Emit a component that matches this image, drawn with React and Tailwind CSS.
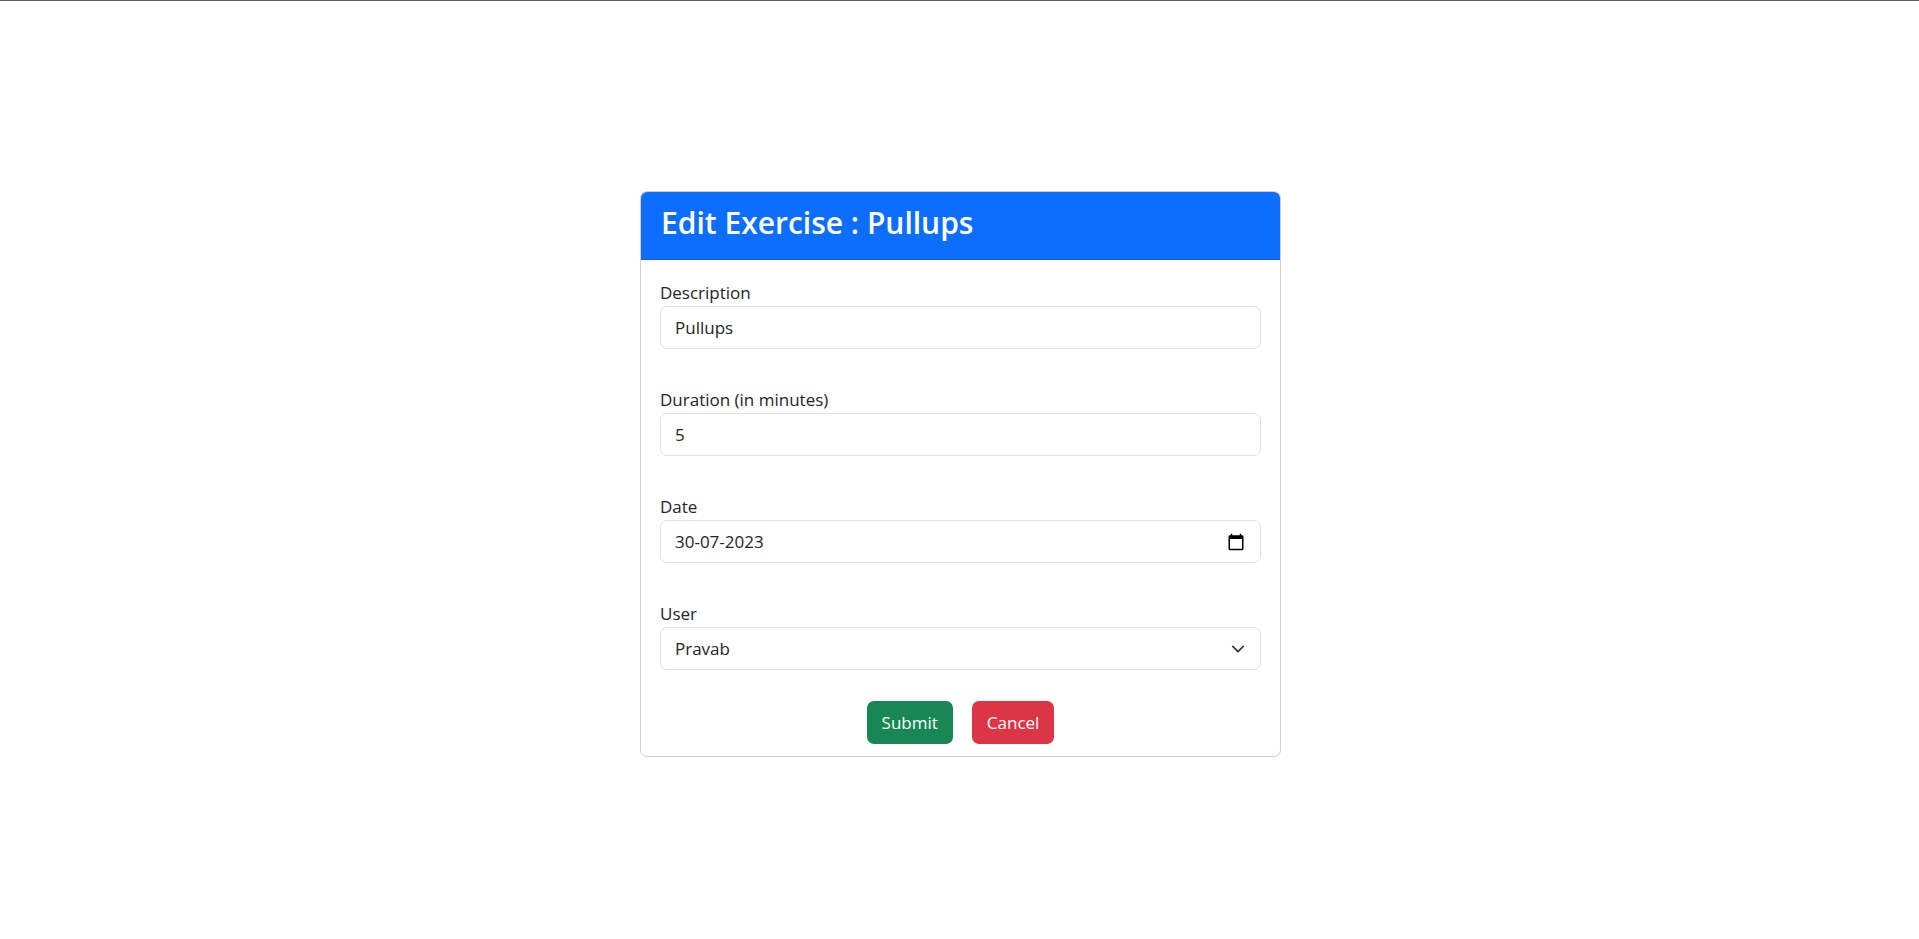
import { useState } from "react";

const control =
  "block h-[43px] w-full rounded-[7px] border border-[#dee2e6] bg-white px-[14px] text-[17px] leading-[27px] text-[#212529] outline-none focus:border-[#86b7fe]";

function Field({ id, label, children }) {
  return (
    <div>
      <label htmlFor={id} className="block h-[27px] text-[17px] leading-[27px]">
        {label}
      </label>
      {children}
    </div>
  );
}

export default function App() {
  const [form, setForm] = useState({
    description: "Pullups",
    duration: "5",
    date: "30-07-2023",
    user: "Pravab",
  });
  const update = (key) => (e) => setForm({ ...form, [key]: e.target.value });

  return (
    <main className="flex min-h-screen flex-col items-center justify-center border-t border-[#606060] bg-white pt-[8px] pl-[2px] font-['Open_Sans','Noto_Sans',sans-serif] text-[#212529]">
      <div className="w-[33.44%] rounded-[7px] border border-[#cfd0d1] bg-white">
        <div className="h-[68px] rounded-t-[6px] border-b border-[#0b5dda] bg-[#0d6efd] px-[20px] pt-[12px]">
          <h2 className="text-[30px] leading-[38px] font-semibold text-white">Edit Exercise : Pullups</h2>
        </div>
        <form className="px-[19px] pt-[19px] pb-[12px]" onSubmit={(e) => e.preventDefault()}>
          <div className="flex flex-col gap-[37px]">
            <Field id="description" label="Description">
              <input id="description" type="text" className={control} value={form.description} onChange={update("description")} />
            </Field>
            <Field id="duration" label="Duration (in minutes)">
              <input id="duration" type="text" inputMode="numeric" className={control} value={form.duration} onChange={update("duration")} />
            </Field>
            <Field id="date" label="Date">
              <div className="relative">
                <input id="date" type="text" className={control} value={form.date} onChange={update("date")} />
                <button type="button" aria-label="Open calendar" className="absolute inset-y-0 right-[16px] flex items-center">
                  <svg width="18" height="18" viewBox="0 0 24 24" fill="#000" aria-hidden="true">
                    <path d="M20 3h-1V1h-2v2H7V1H5v2H4c-1.1 0-2 .9-2 2v16c0 1.1.9 2 2 2h16c1.1 0 2-.9 2-2V5c0-1.1-.9-2-2-2zm0 18H4V8h16v13z" />
                  </svg>
                </button>
              </div>
            </Field>
            <Field id="user" label="User">
              <div className="relative">
                <select id="user" className={`${control} appearance-none`} value={form.user} onChange={update("user")}>
                  <option>Pravab</option>
                </select>
                <svg
                  className="pointer-events-none absolute inset-y-0 right-[14px] my-auto"
                  width="18"
                  height="14"
                  viewBox="0 0 16 16"
                  fill="none"
                  stroke="#343a40"
                  strokeWidth="2"
                  strokeLinecap="round"
                  strokeLinejoin="round"
                  aria-hidden="true"
                >
                  <path d="m2 5 6 6 6-6" />
                </svg>
              </div>
            </Field>
          </div>
          <div className="mt-[31px] flex justify-center gap-[19px]">
            <button type="submit" className="h-[43px] rounded-[7px] bg-[#198754] px-[15px] text-[17px] leading-[27px] text-white">
              Submit
            </button>
            <button type="button" className="h-[43px] rounded-[7px] bg-[#dc3545] px-[15px] text-[17px] leading-[27px] text-white">
              Cancel
            </button>
          </div>
        </form>
      </div>
    </main>
  );
}
